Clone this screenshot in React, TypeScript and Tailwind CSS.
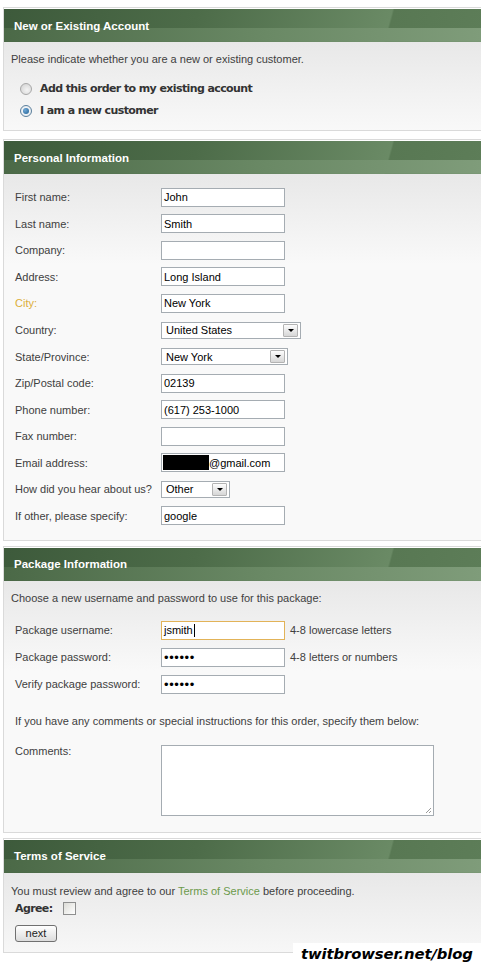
import type { ReactNode } from "react";

const headerBg =
  "[background:linear-gradient(to_right,#4b6947,#6a8965_55%,#7f9c7a)_bottom/100%_42%_no-repeat,linear-gradient(105deg,#3d5a3b_0%,#4d6c49_40%,#6a8a65_80%,#587853_80.4%,#5d7d58_100%)]";

function Section({ title, className = "", children }: { title: string; className?: string; children: ReactNode }) {
  return (
    <section className={`border-y border-l border-[#dadada] pt-px ${className}`}>
      <div className={`flex h-[33px] items-center pl-[10px] text-[11.5px] font-bold text-white ${headerBg}`}>{title}</div>
      <div className="bg-[linear-gradient(#e8e8e8,#f9f9f9_90px)]">{children}</div>
    </section>
  );
}

function Field({ children, className = "border-[#a5acb2]" }: { children?: ReactNode; className?: string }) {
  return (
    <div className={`flex h-[19px] w-[124px] items-center border bg-white pl-[2px] text-[11px] text-black ${className}`}>
      {children}
    </div>
  );
}

function Select({ value, width }: { value: string; width: string }) {
  return (
    <div className={`flex h-[17px] items-center justify-between border border-[#a5acb2] bg-white pl-[4px] pr-[2px] text-[11px] text-black ${width}`}>
      <span>{value}</span>
      <span className="flex h-[13px] w-[15px] items-center justify-center rounded-[1px] border border-[#b3b3b3] bg-[linear-gradient(#fdfdfd,#d6d6d6)]">
        <span className="h-0 w-0 border-x-[3px] border-t-[3px] border-x-transparent border-t-black" />
      </span>
    </div>
  );
}

function Row({ label, labelClass = "", h = "h-[26.56px]", children }: { label: string; labelClass?: string; h?: string; children?: ReactNode }) {
  return (
    <div className={`flex items-center pl-[11px] ${h}`}>
      <span className={`w-[146px] shrink-0 text-[11px] ${labelClass}`}>{label}</span>
      {children}
    </div>
  );
}

function Radio({ checked }: { checked?: boolean }) {
  return (
    <span
      className={`flex h-[12px] w-[12px] shrink-0 items-center justify-center rounded-full border ${
        checked
          ? "border-[#5b7f9c] bg-[radial-gradient(circle,#ffffff,#dfe6ec)]"
          : "border-[#a8a8a8] bg-[radial-gradient(circle_at_60%_60%,#f4f4f4,#cfcfcf)]"
      }`}
    >
      {checked && <span className="h-[6px] w-[6px] rounded-full bg-[radial-gradient(circle_at_35%_35%,#6fa8d6,#1f5f94)]" />}
    </span>
  );
}

const bold = "font-['DejaVu_Sans',Verdana,sans-serif] text-[11px] font-bold tracking-[-0.6px] text-[#333]";
const dots = <span className="text-[13px] leading-none tracking-[0.6px]">••••••</span>;

export default function App() {
  return (
    <div className="relative h-[965px] w-[481px] overflow-hidden bg-white pl-[3px] pt-[7px] font-['Liberation_Sans',Arial,sans-serif] text-[11px] leading-[16px] text-[#404040]">
      <Section title="New or Existing Account">
        <div className="pb-[8px] pt-[9px]">
          <p className="pl-[7px]">Please indicate whether you are a new or existing customer.</p>
          <div className="mt-[11px] pl-[16px]">
            <label className="flex h-[22px] items-center gap-[8px]">
              <Radio />
              <span className={bold}>Add this order to my existing account</span>
            </label>
            <label className="flex h-[22px] items-center gap-[8px]">
              <Radio checked />
              <span className={bold}>I am a new customer</span>
            </label>
          </div>
        </div>
      </Section>

      <Section title="Personal Information" className="mt-[8px]">
        <div className="pb-[10.7px] pt-[10px]">
          <Row label="First name:"><Field>John</Field></Row>
          <Row label="Last name:"><Field>Smith</Field></Row>
          <Row label="Company:"><Field /></Row>
          <Row label="Address:"><Field>Long Island</Field></Row>
          <Row label="City:" labelClass="text-[#dcae3a]"><Field>New York</Field></Row>
          <Row label="Country:"><Select value="United States" width="w-[140px]" /></Row>
          <Row label="State/Province:"><Select value="New York" width="w-[127px]" /></Row>
          <Row label="Zip/Postal code:"><Field>02139</Field></Row>
          <Row label="Phone number:"><Field>(617) 253-1000</Field></Row>
          <Row label="Fax number:"><Field /></Row>
          <Row label="Email address:">
            <Field className="border-[#a5acb2] pl-px">
              <span className="h-[15px] w-[46px] bg-black" />
              <span>@gmail.com</span>
            </Field>
          </Row>
          <Row label="How did you hear about us?"><Select value="Other" width="w-[69px]" /></Row>
          <Row label="If other, please specify:"><Field>google</Field></Row>
        </div>
      </Section>

      <Section title="Package Information" className="mt-[5px]">
        <div className="pb-[16px] pt-[9px]">
          <p className="pl-[7px]">Choose a new username and password to use for this package:</p>
          <div className="mt-[11px]">
            <Row label="Package username:" h="h-[27px]">
              <Field className="border-[#e2b358]">
                jsmith<span className="ml-px h-[13px] w-px bg-black" />
              </Field>
              <span className="ml-[5px]">4-8 lowercase letters</span>
            </Row>
            <Row label="Package password:" h="h-[27px]">
              <Field>{dots}</Field>
              <span className="ml-[5px]">4-8 letters or numbers</span>
            </Row>
            <Row label="Verify package password:" h="h-[27px]">
              <Field>{dots}</Field>
            </Row>
          </div>
          <p className="mt-[15px] pl-[11px]">If you have any comments or special instructions for this order, specify them below:</p>
          <div className="mt-[14px] flex items-start pl-[11px]">
            <span className="w-[146px] shrink-0">Comments:</span>
            <div className="relative mt-[2px] h-[71px] w-[273px] border border-[#a5acb2] bg-white">
              <svg className="absolute bottom-[1px] right-[1px]" width="8" height="8" viewBox="0 0 8 8">
                <path d="M7 2L2 7M7 5L5 7" stroke="#9a9a9a" strokeWidth="1" />
              </svg>
            </div>
          </div>
        </div>
      </Section>

      <Section title="Terms of Service" className="mt-[5px]">
        <div className="pb-[10px] pt-[10px]">
          <p className="pl-[7px]">
            You must review and agree to our <a className="text-[#6b9a4b]">Terms of Service</a> before proceeding.
          </p>
          <div className="mt-[2px] flex h-[16px] items-center pl-[11px]">
            <span className={bold}>Agree:</span>
            <span className="ml-[10px] h-[13px] w-[13px] border border-[#8e8f8f] bg-[linear-gradient(135deg,#dcdcd7,#ffffff)]" />
          </div>
          <div className="mt-[8px] pl-[11px]">
            <button className="flex h-[17px] w-[42px] items-center justify-center rounded-[3px] border border-[#707070] bg-[linear-gradient(#ffffff,#dcdcdc)] text-[11px] text-[#222]">
              next
            </button>
          </div>
        </div>
      </Section>

      <div className="absolute left-[293px] top-[943px] h-[22px] w-[188px] whitespace-nowrap bg-white pl-[8px] font-['DejaVu_Sans',Verdana,sans-serif] text-[14.8px] font-bold italic leading-[22px] tracking-[-0.1px] text-black">
        twitbrowser.net/blog
      </div>
    </div>
  );
}
